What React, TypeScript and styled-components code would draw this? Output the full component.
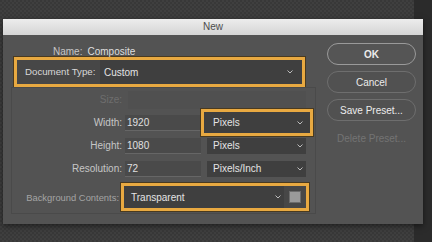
import React from 'react';
import styled, { createGlobalStyle } from 'styled-components';

const GlobalStyle = createGlobalStyle`
  html, body {
    margin: 0;
    padding: 0;
  }
  body {
    font-family: "Liberation Sans", Arial, sans-serif;
  }
`;

// fond (šachovnica + tmavý panel vpravo)
const Screen = styled.div`
  width: 432px;
  height: 242px;
  overflow: hidden;
  box-sizing: border-box;
  padding: 19px 0 0 3px;
  background:
    linear-gradient(to right, transparent 414px, #2b2b2b 414px),
    repeating-conic-gradient(#3f3f3f 0 25%, #383838 0 50%) 0 0 / 4px 4px;
`;

const Dialog = styled.div`
  width: 420px;
  display: flex;
  flex-direction: column;
  box-shadow: 0 2px 6px rgba(0, 0, 0, 0.5);
`;

const TitleBar = styled.div`
  height: 16px;
  line-height: 16px;
  text-align: center;
  font-size: 10px;
  color: #4c4c4c;
  background: linear-gradient(#ededed, #d5d5d5);
`;

const Body = styled.div`
  height: 189px;
  display: flex;
  background: #535353;
`;

const LeftCol = styled.div`
  width: 317px;
  padding-top: 11px;
  box-sizing: border-box;
`;

const NameRow = styled.div`
  height: 11px;
  line-height: 11px;
  display: flex;
  gap: 5px;
  padding-left: 50px;
  font-size: 10px;
`;

const Label = styled.span`
  color: #c6c6c6;
`;

const Value = styled.span`
  color: #dedede;
`;

const Highlight = styled.div<{ $width: number; $height: number }>`
  width: ${p => p.$width}px;
  height: ${p => p.$height}px;
  box-sizing: border-box;
  border: 3px solid #e8a941;
  box-shadow: 0 0 0 1px rgba(70, 48, 12, 0.7);
  background: #474747;
  display: flex;
  align-items: stretch;
`;

const DocTypeBox = styled(Highlight)`
  margin-left: 11px;
`;

const DocLabel = styled.div`
  width: 83px;
  box-sizing: border-box;
  padding-left: 8px;
  line-height: 24px;
  font-size: 9.7px;
  color: #d8d8d8;
  white-space: nowrap;
`;

const SelectField = styled.div<{ $pl: number; $pr: number }>`
  flex: 1;
  display: flex;
  align-items: center;
  justify-content: space-between;
  padding: 0 ${p => p.$pr}px 0 ${p => p.$pl}px;
  background: #3f3f3f;
  font-size: 10px;
  color: #e4e4e4;
  white-space: nowrap;
`;

const Group = styled.div`
  width: 305px;
  margin-left: 8px;
  box-sizing: border-box;
  border: 1px solid #4a4a4a;
  padding: 0 2px 2px 0;
`;

const FieldGrid = styled.div`
  display: grid;
  grid-template-columns: 113px 76px 112px;
  grid-auto-rows: 23px;
  align-items: center;
  font-size: 10px;
`;

const RowLabel = styled.div<{ $dim?: boolean }>`
  text-align: right;
  padding-right: 3px;
  color: ${p => (p.$dim ? '#6e6e6e' : '#c6c6c6')};
`;

const SizeField = styled.div`
  grid-column: 2 / 4;
  height: 18px;
  margin: 0 7px 0 3px;
  background: #505050;
`;

const NumField = styled.div`
  height: 15px;
  line-height: 15px;
  padding-left: 2px;
  background: #4a4a4a;
  border-bottom: 1px solid #666;
  color: #e0e0e0;
`;

const UnitCell = styled.div<{ $hl?: boolean }>`
  height: ${p => (p.$hl ? 27 : 16)}px;
  box-sizing: border-box;
  display: flex;
  border: ${p => (p.$hl ? '3px solid #e8a941' : 'none')};
  box-shadow: ${p => (p.$hl ? '0 0 0 1px rgba(70, 48, 12, 0.7)' : 'none')};
  padding: ${p => (p.$hl ? '0' : '0 7px 0 6px')};
  background: ${p => (p.$hl ? '#474747' : 'transparent')};
`;

const BgRow = styled.div`
  display: flex;
  align-items: center;
  margin-top: 3px;
  height: 28px;
  font-size: 10px;
`;

const BgLabel = styled.div`
  width: 109px;
  box-sizing: border-box;
  padding-right: 2px;
  text-align: right;
  font-size: 9.4px;
  color: #a4a4a4;
  white-space: nowrap;
`;

const BgSelect = styled.div`
  width: 160px;
  display: flex;
  align-items: center;
  justify-content: space-between;
  padding: 0 3px 0 7px;
  box-sizing: border-box;
  background: #3f3f3f;
  color: #e4e4e4;
  font-size: 10px;
`;

const Swatch = styled.div`
  width: 12px;
  height: 12px;
  box-sizing: border-box;
  margin: 5px 0 0 5px;
  background: #9a9a9a;
  border: 1px solid #6c6c6c;
`;

const RightCol = styled.div`
  display: flex;
  flex-direction: column;
  gap: 6px;
  padding: 8px 0 0 7px;
`;

const Button = styled.div<{ $primary?: boolean; $disabled?: boolean }>`
  width: 89px;
  height: 22px;
  box-sizing: border-box;
  border-radius: 11px;
  border: 1px solid ${p => (p.$disabled ? 'transparent' : p.$primary ? '#9a9a9a' : '#6e6e6e')};
  background: ${p => (p.$disabled ? 'transparent' : p.$primary ? '#555' : '#515151')};
  color: ${p => (p.$disabled ? '#737373' : '#ececec')};
  font-weight: ${p => (p.$primary ? 'bold' : 'normal')};
  font-size: 10px;
  display: flex;
  align-items: center;
  justify-content: center;
`;

const Chevron: React.FC = () => (
  <svg width="6" height="4" viewBox="0 0 6 4">
    <polyline points="0.5,0.5 3,3 5.5,0.5" fill="none" stroke="#bdbdbd" strokeWidth="1" />
  </svg>
);

type UnitRow = {
  label: string;
  value: string;
  unit: string;
  hl?: boolean;
};

const rows: UnitRow[] = [
  { label: 'Width:', value: '1920', unit: 'Pixels', hl: true },
  { label: 'Height:', value: '1080', unit: 'Pixels' },
  { label: 'Resolution:', value: '72', unit: 'Pixels/Inch' },
];

const App: React.FC = () => {
  return (
    <Screen>
      <GlobalStyle />
      <Dialog>
        <TitleBar>New</TitleBar>
        <Body>
          <LeftCol>
            <NameRow>
              <Label>Name:</Label>
              <Value>Composite</Value>
            </NameRow>
            <DocTypeBox $width={291} $height={30}>
              <DocLabel>Document Type:</DocLabel>
              <SelectField $pl={4} $pr={9}>
                <span>Custom</span>
                <Chevron />
              </SelectField>
            </DocTypeBox>
            <Group>
              <FieldGrid>
                <RowLabel $dim>Size:</RowLabel>
                <SizeField />
                {rows.map(r => (
                  <React.Fragment key={r.label}>
                    <RowLabel>{r.label}</RowLabel>
                    <NumField>{r.value}</NumField>
                    <UnitCell $hl={r.hl}>
                      <SelectField $pl={r.hl ? 9 : 6} $pr={r.hl ? 7 : 3}>
                        <span>{r.unit}</span>
                        <Chevron />
                      </SelectField>
                    </UnitCell>
                  </React.Fragment>
                ))}
              </FieldGrid>
              <BgRow>
                <BgLabel>Background Contents:</BgLabel>
                <Highlight $width={188} $height={28}>
                  <BgSelect>
                    <span>Transparent</span>
                    <Chevron />
                  </BgSelect>
                  <Swatch />
                </Highlight>
              </BgRow>
            </Group>
          </LeftCol>
          <RightCol>
            <Button $primary>OK</Button>
            <Button>Cancel</Button>
            <Button>Save Preset...</Button>
            <Button $disabled>Delete Preset...</Button>
          </RightCol>
        </Body>
      </Dialog>
    </Screen>
  );
};

export default App;
